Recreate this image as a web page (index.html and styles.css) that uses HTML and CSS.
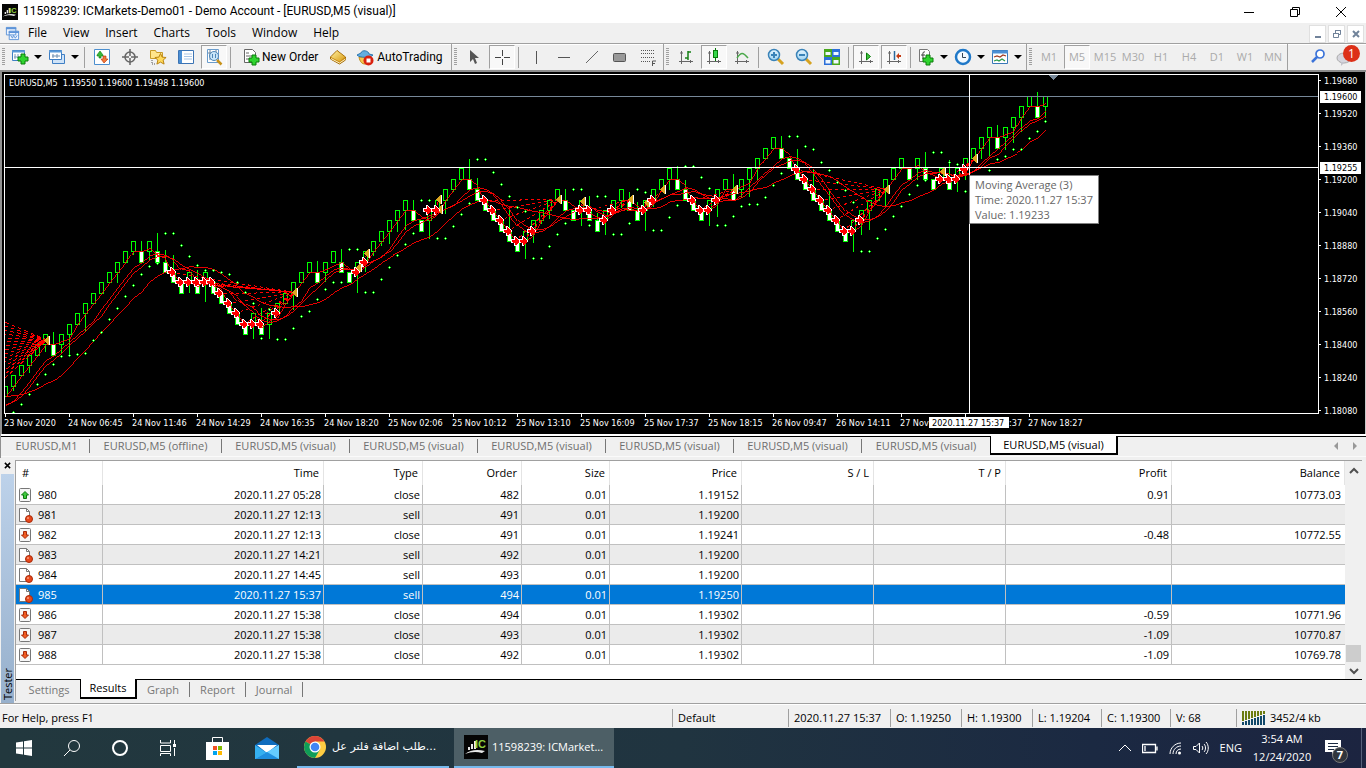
FILE: index.html
```html
<!DOCTYPE html>
<html lang="en">
<head>
<meta charset="utf-8">
<meta name="viewport" content="width=device-width, initial-scale=1">
<title>11598239: ICMarkets-Demo01 - Demo Account - [EURUSD,M5 (visual)]</title>
<link rel="stylesheet" href="styles.css">
</head>
<body>
<svg class="defs" aria-hidden="true">
  <defs>
    <linearGradient id="gold" x1="0" y1="0" x2="1" y2="1"><stop offset="0" stop-color="#fff0a0"/><stop offset="1" stop-color="#d79a12"/></linearGradient>
    <linearGradient id="lens" x1="0" y1="0" x2="0" y2="1"><stop offset="0" stop-color="#e6f6ff"/><stop offset="1" stop-color="#9dd3f2"/></linearGradient>
    <symbol id="plus" viewBox="0 0 12 12"><path d="M4 1h4v3h3v4H8v3H4V8H1V4h3z" fill="#2fd42f" stroke="#0b7d0b"/></symbol>
    <symbol id="axes" viewBox="0 0 18 18"><path d="M4.500 3v13M2 13.500h14M3 5h3M13.500 12v3" fill="none" stroke="#666"/></symbol>
    <symbol id="logo" viewBox="0 0 24 24"><path fill="#050505" d="M0 0h24v24H0z"/><path d="M1 19c5-4 12-5 20-3l-3 2c-6-2-12-1-17 1zM4 12h2v3H4zM7 9h2v5H7zM10 6h2v8h-2z" fill="#e8e8e8"/><text x="11" y="13" font-family="Liberation Sans, sans-serif" font-size="11" font-weight="bold" fill="#8fd040">IC</text></symbol>
    <symbol id="sheet" viewBox="0 0 16 16"><path d="M1.500 1.500h7l3 3v10h-10z" fill="#fff" stroke="#777"/><path d="M8.500 1.500v3h3" fill="none" stroke="#777"/><circle cx="11" cy="12" r="3.500" fill="#e8481c" stroke="#a82a08"/><circle cx="10" cy="11" r="1" fill="#ff9a78"/></symbol>
    <symbol id="down" viewBox="0 0 16 16"><rect x="1.500" y="1.500" width="11" height="13" rx="1" fill="#f6f6f6" stroke="#777"/><path d="M5.500 4.500h3V8h2L7 11.500 3.500 8h2z" fill="#f05a20" stroke="#a52a0a"/></symbol>
    <symbol id="up" viewBox="0 0 16 16"><rect x="1.500" y="1.500" width="11" height="13" rx="1" fill="#f6f6f6" stroke="#777"/><path d="M5.500 11.500h3V8h2L7 4.500 3.500 8h2z" fill="#3cc83c" stroke="#0c780c"/></symbol>
  </defs>
</svg>

<header class="titlebar">
  <svg class="app-icon" viewBox="0 0 24 24"><use href="#logo"/></svg>
  <h1 class="app-title">11598239: ICMarkets-Demo01 - Demo Account - [EURUSD,M5 (visual)]</h1>
  <div class="window-controls">
    <button aria-label="Minimize"><svg viewBox="0 0 12 12"><path d="M1 6.500h10"/></svg></button>
    <button aria-label="Restore"><svg viewBox="0 0 12 12"><path d="M1.500 3.500h7v7h-7zM3.500 3.500v-2h7v7h-2"/></svg></button>
    <button aria-label="Close"><svg viewBox="0 0 12 12"><path d="M1 1l10 10M11 1L1 11"/></svg></button>
  </div>
</header>

<nav class="menubar" aria-label="Main menu">
  <svg class="menu-icon" viewBox="0 0 16 16"><path d="M1.500 1.500h10v8h-10zM4.500 5.500h10v9h-10z" fill="#eef5ff" stroke="#5d93d8"/><path d="M1 2.500h11M4 6.500h11" stroke="#5d93d8" stroke-width="2"/><path d="M6 10l2 3 1-3 2 3 2-3" fill="none" stroke="#5d93d8"/></svg>
  <button>File</button><button>View</button><button>Insert</button><button>Charts</button><button>Tools</button><button>Window</button><button>Help</button>
  <div class="mdi-controls">
    <button aria-label="Minimize chart"><svg viewBox="0 0 12 12"><path d="M3 9h6" stroke-width="2"/></svg></button>
    <button aria-label="Restore chart"><svg viewBox="0 0 12 12"><path d="M2.500 5.500h5v4h-5zM4.500 5V2.500h5v4H8M2 5.500h6M4 2.500h6" /></svg></button>
    <button aria-label="Close chart"><svg viewBox="0 0 12 12"><path d="M3 3l6 6M9 3L3 9" stroke-width="2"/></svg></button>
  </div>
</nav>

<div class="toolbar" role="toolbar" aria-label="Toolbar">
  <div class="tools tools-standard">
    <button class="combo" aria-label="New chart"><svg viewBox="0 0 18 18"><path d="M1.500 2.500h12v10h-12z" fill="#fff" stroke="#3f7fc4"/><path d="M1 3.500h13" stroke="#5b9ad8" stroke-width="2"/><path d="M4 6v5M3 9h7M7 6v4" stroke="#7a9ab8"/><use href="#plus" x="6" y="5" width="12" height="12"/></svg><i class="caret"></i></button>
    <button class="combo" aria-label="Profiles"><svg viewBox="0 0 18 18"><path d="M4.500 6.500h12v9h-12z" fill="#cfe3f8" stroke="#3f7fc4"/><path d="M1.500 2.500h12v9h-12z" fill="#fff" stroke="#3f7fc4"/><path d="M1 3.500h13" stroke="#5b9ad8" stroke-width="2"/><path d="M4 8h8M5 6v4M9 6v4" stroke="#6f8fb0"/></svg><i class="caret"></i></button>
    <span class="sep"></span>
    <button aria-label="Market Watch"><svg viewBox="0 0 18 18"><path d="M1.500 1.500h15v15h-15z" fill="#fff" stroke="#4c8fcf"/><path d="M4 8V7l3-4 3 4v1H8v2H6V8z" fill="#38b838" stroke="#0a7a0a" stroke-width=".6"/><path d="M8 11l3 4 4-4h-2V8h-3v3z" fill="#f27a3a" stroke="#b32c04" stroke-width=".6"/></svg></button>
    <button aria-label="Data Window"><svg viewBox="0 0 18 18"><path d="M9 1v7M9 10v7M1 9h7M10 9h7" stroke="#666" stroke-width="1.500"/><circle cx="9" cy="9" r="5" fill="none" stroke="#666" stroke-width="1.500"/></svg></button>
    <button aria-label="Navigator"><svg viewBox="0 0 18 18"><path d="M1.500 2.500h5l1 2h6v6h-12z" fill="#ffe58c" stroke="#c79a28"/><path d="M3 12v4h4" fill="none" stroke="#555" stroke-dasharray="1 1"/><path d="M11.500 5.500l1.600 3.600 4 .4-3 2.600 1 4-3.600-2-3.600 2 1-4-3-2.600 4-.4z" fill="#ffd95a" stroke="#b98412"/></svg></button>
    <button aria-label="Terminal"><svg viewBox="0 0 18 18"><path d="M1.500 2.500h15v13h-15z" fill="#fff" stroke="#3c74b4"/><path d="M2 3h3v12H2z" fill="#4b8fd4"/><path d="M7 6h8M7 8.500h8M7 11h8" stroke="#a9c6e6"/></svg></button>
    <button class="pressed" aria-label="Strategy Tester" aria-pressed="true"><svg viewBox="0 0 18 18"><path d="M2.500 1.500h11v13h-11z" fill="#fff" stroke="#6a9ccc"/><path d="M5 2v10M11 2v5M3 5h4" stroke="#68829a"/><circle cx="9" cy="8" r="4.500" fill="#bfe2f8" fill-opacity=".85" stroke="#4f86b8"/><path d="M7.500 6v4M10.500 6v4" stroke="#4f86b8"/><path d="M12 12l4.500 4.500" stroke="#c8921a" stroke-width="2.500"/></svg></button>
    <span class="sep"></span>
    <button class="labelled"><svg viewBox="0 0 18 18"><path d="M2.500 1.500h8l3 3v10h-11z" fill="#fff" stroke="#666"/><path d="M4 5h3M4 8h7M4 11h4" stroke="#666"/><use href="#plus" x="6" y="6" width="12" height="12"/></svg>New Order</button>
    <button aria-label="MetaEditor"><svg viewBox="0 0 18 18"><path d="M1.500 9L8 2.500 16.500 9v3L10.500 16 1.500 11z" fill="#c98a14" stroke="#a26a06"/><path d="M2 9l6-6 8 6-5.500 4.500z" fill="url(#gold)"/><path d="M2 10.500L10.500 15l6-4" fill="none" stroke="#fff3c4"/></svg></button>
    <button class="labelled labelled-auto"><svg viewBox="0 0 18 18"><path d="M3 9c1 5 3 7 6 7s6-3 6-7z" fill="#f6c650" stroke="#bf8a18"/><path d="M1 7c2 3 14 3 16 0l-4-1c0-3-7-5-8-1z" fill="#63aee0" stroke="#2f78b0"/><circle cx="12.500" cy="12.500" r="5" fill="#d9200e"/><path fill="#fff" d="M10.500 10.500h4v4h-4z"/></svg>AutoTrading</button>
  </div>
  <div class="tools tools-line">
    <button aria-label="Cursor"><svg viewBox="0 0 18 18"><path d="M5 2v12l3-3 2 5 2-1-2-5h4z" fill="#555"/></svg></button>
    <button class="pressed" aria-label="Crosshair" aria-pressed="true"><svg viewBox="0 0 18 18"><path d="M9.500 2v6M9.500 11v6M2 9.500h6M11 9.500h6" stroke="#444"/></svg></button>
    <span class="sep"></span>
    <button aria-label="Vertical Line"><svg viewBox="0 0 18 18"><path d="M9.500 3v13" stroke="#555"/></svg></button>
    <button aria-label="Horizontal Line"><svg viewBox="0 0 18 18"><path d="M3 9.500h12" stroke="#555"/></svg></button>
    <button aria-label="Trendline"><svg viewBox="0 0 18 18"><path d="M3 15L15 3" stroke="#666"/></svg></button>
    <button aria-label="Rectangle"><svg viewBox="0 0 18 18"><rect x="2.500" y="5.500" width="12" height="8" rx="1" fill="#999" stroke="#555"/></svg></button>
    <button aria-label="Fibonacci"><svg viewBox="0 0 18 18"><path d="M2 2.500h14M2 5.500h14M2 9.500h14M2 13.500h9" stroke="#555" stroke-dasharray="1 1"/><path d="M13.500 18v-5H17M13 15.500h3" fill="none" stroke="#555"/></svg></button>
  </div>
  <div class="tools tools-charts">
    <button aria-label="Bar Chart"><svg viewBox="0 0 18 18"><use href="#axes"/><path d="M11 3v9M11 4h3M8 10h3" stroke="#168016" stroke-width="1.500"/></svg></button>
    <button class="pressed" aria-label="Candlesticks" aria-pressed="true"><svg viewBox="0 0 18 18"><use href="#axes"/><path d="M10.500 0v13" stroke="#087a08"/><rect x="8.500" y="2.500" width="4" height="7" fill="#35d64a" stroke="#087a08"/></svg></button>
    <button aria-label="Line Chart"><svg viewBox="0 0 18 18"><use href="#axes"/><path d="M4 10c4-6 6-6 11 0" fill="none" stroke="#4aa84a" stroke-width="1.500"/></svg></button>
    <span class="sep"></span>
    <button aria-label="Zoom In"><svg viewBox="0 0 18 18"><path d="M10.500 10.500l5.500 5.500" stroke="#d6a220" stroke-width="3"/><circle cx="7" cy="7" r="5.500" fill="url(#lens)" stroke="#3a83b8" stroke-width="1.500"/><path d="M4 7h6M7 4v6" stroke="#3a83b8" stroke-width="2"/></svg></button>
    <button aria-label="Zoom Out"><svg viewBox="0 0 18 18"><path d="M10.500 10.500l5.500 5.500" stroke="#d6a220" stroke-width="3"/><circle cx="7" cy="7" r="5.500" fill="url(#lens)" stroke="#3a83b8" stroke-width="1.500"/><path d="M4 7h6" stroke="#3a83b8" stroke-width="2"/></svg></button>
    <button aria-label="Tile Windows"><svg viewBox="0 0 18 18"><path d="M1 1h8v8H1zM9 9h8v8H9z" fill="#48a81c"/><path d="M9 1h8v8H9zM1 9h8v8H1z" fill="#2c6fd8"/><path d="M2.500 4h5v3h-5zM10.500 4h5v3h-5zM2.500 12h5v3.500h-5zM10.500 12h5v3.500h-5z" fill="#f0f8ff"/></svg></button>
    <span class="sep"></span>
    <button class="pressed" aria-label="Auto Scroll" aria-pressed="true"><svg viewBox="0 0 18 18"><use href="#axes"/><path d="M9.500 5l4 3.500-4 3.500z" fill="#3fc43f" stroke="#0b7d0b"/></svg></button>
    <button class="pressed" aria-label="Chart Shift" aria-pressed="true"><svg viewBox="0 0 18 18"><use href="#axes"/><path d="M9.500 3v9" stroke="#28699c" stroke-width="1.500"/><path d="M11 8l3-3v2h2v2h-2v2z" fill="#c43a12"/></svg></button>
    <span class="sep"></span>
    <button class="combo" aria-label="Indicators"><svg viewBox="0 0 18 18"><path d="M2.500 1.500h8l2 2v10h-10z" fill="#fff" stroke="#777"/><path d="M8 4c-3-1-2 3-2 7M4 7h4" fill="none" stroke="#444"/><use href="#plus" x="5" y="6" width="12" height="12"/></svg><i class="caret"></i></button>
    <button class="combo" aria-label="Periods"><svg viewBox="0 0 18 18"><circle cx="9" cy="9" r="7" fill="#f3faff" stroke="#1f78c8" stroke-width="2.500"/><path d="M8.500 5v4.500H12" fill="none" stroke="#345"/></svg><i class="caret"></i></button>
    <button class="combo" aria-label="Templates"><svg viewBox="0 0 18 18"><path d="M1.500 2.500h15v13h-15z" fill="#fff" stroke="#3878b8"/><path d="M1 4h16" stroke="#4b8fd4" stroke-width="3"/><path d="M3 9l3-1 3 1 3-2 3 1" fill="none" stroke="#a03a20" stroke-width="1.300"/><path d="M3 13l3-1 2 1 3-2 3 2" fill="none" stroke="#2b9a4a" stroke-width="1.300"/></svg><i class="caret"></i></button>
  </div>
  <div class="tools tools-periods">
    <button>M1</button><button class="pressed" aria-pressed="true">M5</button><button>M15</button><button>M30</button><button>H1</button><button>H4</button><button>D1</button><button>W1</button><button>MN</button>
  </div>
  <div class="tools-end">
    <button aria-label="Search"><svg viewBox="0 0 18 18"><circle cx="11" cy="6" r="4" fill="#fff" stroke="#3b73d9" stroke-width="1.700"/><path d="M8 9l-5 5" stroke="#3b73d9" stroke-width="2.500"/></svg></button>
    <button class="chat" aria-label="Notifications"><svg viewBox="0 0 18 18"><ellipse cx="8" cy="10" rx="7" ry="5" fill="#d6d6de" stroke="#aaa"/><path d="M5 14v4l4-4z" fill="#c4c4cc"/></svg><span class="badge">1</span></button>
  </div>
</div>

<main class="chart">
  <div class="plot">
    <svg id="plot" class="plot-canvas" role="img" aria-label="EURUSD M5 price chart"></svg>
    <div class="tooltip">Moving Average (3)<br>Time: 2020.11.27 15:37<br>Value: 1.19233</div>
  </div>
  <svg id="price-scale" class="price-scale"></svg>
  <svg id="time-scale" class="time-scale"></svg>
</main>

<div class="chart-tabs">
  <button class="chart-tab chart-tab-first">EURUSD,M1</button>
  <button class="chart-tab chart-tab-wide">EURUSD,M5 (offline)</button>
  <button class="chart-tab">EURUSD,M5 (visual)</button>
  <button class="chart-tab">EURUSD,M5 (visual)</button>
  <button class="chart-tab">EURUSD,M5 (visual)</button>
  <button class="chart-tab">EURUSD,M5 (visual)</button>
  <button class="chart-tab">EURUSD,M5 (visual)</button>
  <button class="chart-tab">EURUSD,M5 (visual)</button>
  <button class="chart-tab active">EURUSD,M5 (visual)</button>
  <div class="tab-scroll"><button aria-label="Scroll left"><svg viewBox="0 0 8 8"><path d="M6 0v8L2 4z"/></svg></button><button aria-label="Scroll right"><svg viewBox="0 0 8 8"><path d="M2 0v8l4-4z"/></svg></button></div>
</div>

<section class="tester" aria-label="Tester">
  <div class="tester-side">
    <button aria-label="Close tester"><svg viewBox="0 0 8 8"><path d="M1 1l6 6M7 1L1 7" stroke="#000" stroke-width="1.700"/></svg></button>
    <div class="tester-caption"><span>Tester</span></div>
  </div>
  <div class="tester-main">
    <div class="results">
      <table>
        <colgroup><col class="c-num"><col class="c-time"><col class="c-type"><col class="c-order"><col class="c-size"><col class="c-price"><col class="c-price"><col class="c-price"><col class="c-profit"><col></colgroup>
        <thead><tr><th>#</th><th>Time</th><th>Type</th><th>Order</th><th>Size</th><th>Price</th><th>S / L</th><th>T / P</th><th>Profit</th><th>Balance</th></tr></thead>
        <tbody>
          <tr><td><svg><use href="#up"/></svg>980</td><td>2020.11.27 05:28</td><td>close</td><td>482</td><td>0.01</td><td>1.19152</td><td></td><td></td><td>0.91</td><td>10773.03</td></tr>
          <tr><td><svg><use href="#sheet"/></svg>981</td><td>2020.11.27 12:13</td><td>sell</td><td>491</td><td>0.01</td><td>1.19200</td><td></td><td></td><td></td><td></td></tr>
          <tr><td><svg><use href="#down"/></svg>982</td><td>2020.11.27 12:13</td><td>close</td><td>491</td><td>0.01</td><td>1.19241</td><td></td><td></td><td>-0.48</td><td>10772.55</td></tr>
          <tr><td><svg><use href="#sheet"/></svg>983</td><td>2020.11.27 14:21</td><td>sell</td><td>492</td><td>0.01</td><td>1.19200</td><td></td><td></td><td></td><td></td></tr>
          <tr><td><svg><use href="#sheet"/></svg>984</td><td>2020.11.27 14:45</td><td>sell</td><td>493</td><td>0.01</td><td>1.19200</td><td></td><td></td><td></td><td></td></tr>
          <tr class="selected"><td><svg><use href="#sheet"/></svg>985</td><td>2020.11.27 15:37</td><td>sell</td><td>494</td><td>0.01</td><td>1.19250</td><td></td><td></td><td></td><td></td></tr>
          <tr><td><svg><use href="#down"/></svg>986</td><td>2020.11.27 15:38</td><td>close</td><td>494</td><td>0.01</td><td>1.19302</td><td></td><td></td><td>-0.59</td><td>10771.96</td></tr>
          <tr><td><svg><use href="#down"/></svg>987</td><td>2020.11.27 15:38</td><td>close</td><td>493</td><td>0.01</td><td>1.19302</td><td></td><td></td><td>-1.09</td><td>10770.87</td></tr>
          <tr><td><svg><use href="#down"/></svg>988</td><td>2020.11.27 15:38</td><td>close</td><td>492</td><td>0.01</td><td>1.19302</td><td></td><td></td><td>-1.09</td><td>10769.78</td></tr>
        </tbody>
      </table>
      <div class="scrollbar"><svg viewBox="0 0 10 10"><path d="M1 7l4-4 4 4"/></svg><span class="thumb"></span><svg viewBox="0 0 10 10"><path d="M1 3l4 4 4-4"/></svg></div>
    </div>
    <div class="tester-tabs">
      <button>Settings</button><button class="active">Results</button><button>Graph</button><button>Report</button><button>Journal</button>
    </div>
  </div>
</section>

<footer class="statusbar">
  <span class="status-help">For Help, press F1</span>
  <span class="s-profile">Default</span><span class="s-time">2020.11.27 15:37</span><span class="s-ohl">O: 1.19250</span><span class="s-ohl">H: 1.19300</span><span class="s-close">L: 1.19204</span><span class="s-close">C: 1.19300</span><span class="s-vol">V: 68</span>
  <span class="s-net"><svg viewBox="0 0 24 14"><path d="M0 0h2v10H0zM3 0h2v9H3zM6 0h2v8H6zM9 0h2v7H9zM12 0h2v6h-2zM15 0h2v5h-2zM18 0h2v4h-2zM21 0h2v3h-2z" fill="#6b7c10"/><path d="M0 11h2v3H0zM3 10h2v4H3zM6 9h2v5H6zM9 8h2v6H9zM12 7h2v7h-2zM15 6h2v8h-2zM18 5h2v9h-2zM21 4h2v10h-2z" fill="#10486a"/></svg>3452/4 kb</span>
</footer>

<div class="taskbar">
  <button aria-label="Start"><svg class="filled" viewBox="0 0 18 18"><path d="M1 3.500l7-1v6H1zM9 2.300L17 1v7.500H9zM1 9.500h7v6l-7-1zM9 9.500h8V17l-8-1.300z" fill="#fff"/></svg></button>
  <button aria-label="Search"><svg viewBox="0 0 18 18"><circle cx="11" cy="7" r="5.500"/><path d="M7 11l-6 6"/></svg></button>
  <button aria-label="Cortana"><svg viewBox="0 0 18 18"><circle cx="9" cy="9" r="7" stroke-width="2"/></svg></button>
  <button aria-label="Task View"><svg viewBox="0 0 18 18"><path d="M1.500 1v3h10V1M1.500 6.500h10v6h-10zM1.500 17v-2.500h10V17M15.500 1v4M15.500 9v8"/><path d="M14 5h3v3h-3z" fill="#fff" stroke="none"/></svg></button>
  <button class="wide-icon" aria-label="Microsoft Store"><svg class="filled" viewBox="0 0 24 24"><path d="M7.500 6V1.500h10V6" stroke="#fff"/><path fill="#fff" d="M1 6h23v18H1z"/><path fill="#f25022" d="M8 10h4v4H8z"/><path fill="#7fba00" d="M13 10h4v4h-4z"/><path fill="#00a4ef" d="M8 15h4v4H8z"/><path fill="#ffb900" d="M13 15h4v4h-4z"/></svg></button>
  <button class="wide-icon wide-icon-last" aria-label="Mail"><svg class="filled" viewBox="0 0 24 24"><path d="M0 9l12-8 12 8v14H0z" fill="#0f6cbd"/><path d="M2 9h20l-10 8z" fill="#fff"/><path d="M0 9l12 8 12-8v14H0z" fill="#35b0f0"/><path d="M0 23L24 9v14z" fill="#65ccff"/><path d="M0 23l12-7 12 7z" fill="#1f8fe0"/></svg></button>
  <button class="task task-chrome"><svg class="filled" viewBox="0 0 24 24"><circle cx="12" cy="12" r="11" fill="#ffcd42"/><path d="M12 12L2.500 6.500A11 11 0 0 1 21.500 6.500H12z" fill="#db4437"/><path d="M2.500 6.500A11 11 0 0 0 12 23l4.800-8.200L12 12z" fill="#0f9d58"/><circle cx="12" cy="12" r="5.500" fill="#fff"/><circle cx="12" cy="12" r="4.300" fill="#4285f4"/></svg><span>طلب اضافة فلتر عل...</span></button>
  <button class="task task-active"><svg class="filled" viewBox="0 0 24 24"><use href="#logo"/></svg><span>11598239: ICMarket...</span></button>
  <div class="tray">
    <svg viewBox="0 0 14 14"><path d="M1 10l6-6 6 6"/></svg>
    <svg viewBox="0 0 16 14"><path d="M.5 3.500h13v8H.5zM15 5.500v4M3 5v5" stroke-width="1.300"/></svg>
    <svg viewBox="0 0 14 14"><path d="M2 13C2 7 7 2 13 2M5 13c0-5 4-8 8-8M8 13c0-3 2-5 5-5"/><circle cx="11.500" cy="12" r="1.500" fill="#fff" stroke="none"/></svg>
    <svg class="volume" viewBox="0 0 18 14"><path d="M1.500 5.500H4L7.500 2v10L4 8.500H1.500zM10 5c1 1 1 3 0 4M12 3c2 2 2 6 0 8M14 1c3 3 3 9 0 12"/></svg>
    <span class="lang">ENG</span>
    <time class="clock">3:54 AM<br>12/24/2020</time>
    <button class="action" aria-label="Notifications"><svg viewBox="0 0 16 16"><path d="M0 0h16v12h-6l-3 4v-4H0z" fill="#fff" stroke="none"/><path class="note-lines" d="M3 3.500h10M3 6.500h10M3 9.500h6"/></svg><span class="count">7</span></button>
  </div>
</div>
<script src="chart.js"></script>
</body>
</html>
```
FILE: styles.css
```css
* { box-sizing: border-box; }

body {
  margin: 0;
  min-height: 100vh;
  display: flex;
  flex-direction: column;
  overflow: hidden;
  background: #f0f0f0;
  color: #000;
  font: 11px/16px "Open Sans", "Noto Sans", sans-serif;
}

button {
  margin: 0;
  padding: 0;
  border: 0;
  background: none;
  color: inherit;
  font: inherit;
  display: flex;
  align-items: center;
  justify-content: center;
  flex: none;
  white-space: nowrap;
}

svg { flex: none; }
.defs { position: absolute; width: 0; height: 0; }

/* Title bar */
.titlebar { display: flex; align-items: center; height: 23px; background: #fff; padding-left: 2px; }
.app-icon { width: 16px; height: 16px; }
.app-title { margin: 0 0 0 5px; font: 400 12px/23px Roboto, "Open Sans", sans-serif; }
.window-controls { display: flex; margin-left: auto; padding-right: 2px; }
.window-controls button { width: 46px; height: 20px; }
.window-controls svg { width: 12px; height: 12px; fill: none; stroke: #000; }

/* Menu bar */
.menubar { display: flex; align-items: center; height: 20px; padding-left: 5px; font-size: 12px; }
.menu-icon { width: 15px; height: 15px; }
.menubar > button { padding: 0 8px; height: 20px; }
.mdi-controls { display: flex; gap: 2px; margin: 1px 2px 0 auto; }
.mdi-controls button { width: 17px; height: 18px; background: #fff; border: 1px solid #e0e0e0; }
.mdi-controls svg { width: 12px; height: 12px; fill: none; stroke: #71839a; }

/* Toolbar */
.toolbar { display: flex; height: 29px; border-top: 1px solid #a0a0a0; border-bottom: 2px solid #8c8c8c; box-shadow: inset 0 1px #fff; }
.tools { display: flex; align-items: center; padding-left: 8px; border-right: 1px solid #a0a0a0; flex: none; background: repeating-linear-gradient(#a0a0a0 0 1px, #f0f0f0 1px 2px) 2px 4px / 3px 18px no-repeat; }
.tools button { width: 28px; height: 24px; }
.tools svg { width: 18px; height: 18px; }
.tools .combo { width: 37px; gap: 5px; }
.tools .labelled { width: auto; gap: 2px; padding: 0 6px 0 8px; font: 12px/16px Roboto, "Open Sans", sans-serif; }
.tools .labelled-auto { padding: 0 0 0 4px; gap: 3px; }
.caret { border: 4px solid transparent; border-top-color: #000; border-bottom: 0; width: 0; }
.sep { width: 4px; height: 21px; border-left: 1px solid #a0a0a0; margin-left: 2px; flex: none; }
.tools .pressed { width: 26px; margin: 0 1px; border: 1px solid #a0a0a0; border-right-color: #fff; border-bottom-color: #fff; background: #f8f8f8; }
.tools-standard { width: 452px; }
.tools-line { width: 212px; }
.tools-charts { width: 363px; }
.tools-periods { width: 261px; color: #aaa; }
.tools-end { display: flex; align-items: center; gap: 6px; margin-left: auto; padding-right: 6px; }
.tools-end button { width: 24px; height: 24px; }
.tools-end svg { width: 18px; height: 18px; }
.tools-end .chat { position: relative; justify-content: flex-start; }
.badge { position: absolute; right: 0; top: 0; width: 17px; height: 17px; border-radius: 50%; background: #dd3018; color: #fff; font-size: 12px; line-height: 17px; }

/* Chart */
.chart {
  display: grid;
  grid-template: minmax(200px, 1fr) 20px / 1fr 46px;
  flex: 1;
  padding: 2px 0 0 2px;
  background: #000;
  border-left: 2px solid #909090;
  border-right: 1px solid #c8c8c8;
}
.plot { position: relative; border: 1px solid #fff; min-width: 0; }
.plot-canvas { position: absolute; inset: 0; width: 100%; height: 100%; overflow: hidden; }
.price-scale { width: 46px; height: 100%; overflow: visible; }
.time-scale { grid-column: 1 / 3; width: 100%; height: 20px; overflow: hidden; }
.chart text { font: 9px "DejaVu Sans Condensed", "Open Sans", sans-serif; fill: #fff; white-space: pre; }
.chart text.on-white { fill: #000; }
.tooltip { position: absolute; left: 964px; top: 100px; padding: 1px 5px; background: #fff; border: 1px solid #808080; color: #666; line-height: 15px; white-space: nowrap; }

/* Chart tabs */
.chart-tabs { display: flex; height: 24px; padding: 0 0 4px 3px; border-left: 1px solid #909090; color: #6e6e6e; background: linear-gradient(#fff 0 2px, #000 2px 3px, #f0f0f0 3px 22px, #fafafa 22px 23px, #f0f0f0 23px); }
.chart-tab { width: 128px; height: 14px; margin-top: 5px; border-right: 1px solid #777; }
.chart-tab-first { width: 86px; }
.chart-tab-wide { width: 132px; }
.chart-tab:nth-last-child(3) { border-right: 0; }
.chart-tab.active { height: 19px; margin-top: 2px; background: #fff; color: #000; border: solid #000; border-width: 0 2px 2px 1px; }
.tab-scroll { display: flex; gap: 11px; margin: 6px 7px 0 auto; }
.tab-scroll button { height: 11px; }
.tab-scroll svg { width: 8px; height: 8px; fill: #999; }

/* Tester */
.tester { display: flex; }
.tester-side { display: flex; flex-direction: column; width: 15px; padding: 2px 1px 0; }
.tester-side button { height: 11px; }
.tester-side svg { width: 7px; height: 7px; }
.tester-caption { flex: 1; display: flex; align-items: flex-end; justify-content: center; margin-top: 3px; padding-bottom: 3px; background: linear-gradient(#bdd2ea, #97b0cc); }
.tester-caption span { writing-mode: vertical-rl; transform: rotate(180deg); line-height: 13px; }
.tester-main { flex: 1; min-width: 0; margin: 2px 4px 2px 0; border-left: 1px solid #a0a0a0; border-top: 1px solid #a0a0a0; }
.results { display: flex; background: #fff; padding-bottom: 14px; border-bottom: 1px solid #000; position: relative; }
table { flex: 1; align-self: flex-start; min-width: 0; table-layout: fixed; border-collapse: separate; border-spacing: 0; }
.c-num { width: 87px; }
.c-time { width: 221px; }
.c-type, .c-order { width: 99px; }
.c-size { width: 88px; }
.c-price { width: 132px; }
.c-profit { width: 166px; }
th { height: 24px; padding: 0 4px; font-weight: 400; text-align: right; border-right: 1px solid #e4e4e4; }
th:first-child { text-align: left; padding-left: 6px; }
td { height: 20px; padding: 0 2px; text-align: right; border-right: 1px solid #c0c0c0; border-bottom: 1px solid #c0c0c0; }
td:first-child { text-align: left; }
td:last-child { border-right: 0; padding-right: 4px; }
td svg { width: 16px; height: 16px; vertical-align: -4px; margin: 0 4px 0 0; }
tbody tr:nth-child(even) { background: #ebebeb; }
tbody tr.selected { background: #0078d7; color: #fff; }
.scrollbar { display: flex; flex-direction: column; align-items: center; width: 17px; margin-bottom: -14px; padding: 5px 0 3px; background: #f0f0f0; }
.scrollbar svg { width: 10px; height: 10px; fill: none; stroke: #505050; stroke-width: 2; }
.thumb { width: 15px; height: 17px; margin: auto 0 4px; background: #cdcdcd; }
.tester-tabs { display: flex; height: 21px; color: #777; }
.tester-tabs button { height: 15px; padding: 0 10px; margin-top: 2px; border-right: 1px solid #777; }
.tester-tabs button:first-child { border-right: 0; width: 64px; padding-right: 8px; }
.tester-tabs .active { position: relative; height: 20px; width: 57px; margin-top: -1px; background: #fff; color: #000; border: solid #000; border-width: 0 2px 2px 1px; }

/* Status bar */
.statusbar { display: flex; align-items: center; height: 25px; border-top: 1px solid #a0a0a0; box-shadow: inset 0 1px #fff; padding-top: 4px; }
.statusbar span { height: 18px; line-height: 18px; padding-left: 5px; border-left: 1px solid #a0a0a0; white-space: nowrap; flex: none; }
.statusbar .status-help { flex: 1; padding-left: 2px; border: 0; }
.s-profile { width: 116px; }
.s-time { width: 102px; }
.s-ohl { width: 71px; }
.s-close { width: 69px; }
.s-vol { width: 66px; }
.s-net { display: flex; align-items: center; gap: 4px; width: 130px; }
.s-net svg { width: 24px; height: 14px; }

/* Taskbar */
.taskbar { display: flex; height: 40px; background: linear-gradient(90deg, #22383e, #203440 50%, #1b2942 80%, #1c2440); color: #fff; }
.taskbar svg { width: 18px; height: 18px; fill: none; stroke: #fff; stroke-width: 1; }
.taskbar svg.filled { stroke: none; }
.taskbar button { width: 48px; }
.taskbar .wide-icon { width: 50px; }
.taskbar .wide-icon-last { margin-right: 5px; }
.taskbar .wide-icon svg, .taskbar .task svg { width: 24px; height: 24px; }
.taskbar .task { justify-content: flex-start; border-bottom: 2px solid #76b9ed; padding-left: 6px; gap: 4px; width: 152px; margin-right: 5px; }
.taskbar .task-chrome { gap: 5px; }
.taskbar .task-chrome span { font-family: "DejaVu Sans", sans-serif; }
.taskbar .task-active { width: 160px; padding-left: 10px; background: #4d5f66; margin-right: 0; }
.tray { display: flex; align-items: center; gap: 10px; margin-left: auto; padding-right: 4px; }
.tray > svg { width: 14px; height: 14px; }
.tray > svg.volume { width: 18px; }
.tray > svg:nth-child(2) { width: 16px; }
.clock { text-align: center; line-height: 18px; width: 60px; }
.taskbar .action { position: relative; width: 40px; height: 40px; padding-left: 3px; border-right: 1px solid #56617a; justify-content: flex-start; }
.action svg { width: 16px; height: 16px; }
.note-lines { stroke: #1c2a42; }
.count { position: absolute; left: 10px; top: 19px; width: 16px; height: 16px; line-height: 14px; border: 1px solid #777; border-radius: 50%; background: #30353c; font-weight: 700; }
```
FILE: chart.js
```js
// Brick chart: level 0 is 1.19600, each level is 5 points lower.
const STEP = 8, X0 = 5, Y0 = 96, LEVEL = 10.35;
const xOf = k => X0 + STEP * k;
const yOf = level => Math.round(Y0 + LEVEL * level);

// Body top level of each candle; a minus sign marks a falling candle.
const bricks = [
  28,27,26,25,24,23,-24,23,22,21,20,19,18,17,16,15,14,-15,14,-15,-16,-17,-18,17,-18,17,-18,-19,-20,-21,-22,21,
  -22,21,20,19,18,17,16,-17,16,15,-16,-17,16,15,14,13,12,11,10,-11,-12,11,10,9,8,7,-8,-9,-10,-11,-12,-13,-14,
  13,12,11,10,9,-10,-11,10,-11,-12,11,10,9,-10,-11,10,9,8,7,-8,-9,-10,-11,10,9,8,-9,8,7,6,5,4,-5,-6,-7,-8,-9,
  -10,-11,-12,-13,12,11,10,9,8,7,6,-7,6,-7,-8,7,-8,7,6,5,4,3,-4,3,2,1,0,-1,0
];

// Candle index -> far end of the wick.
const wicks = {
  1:391,3:373,5:352,6:332,7:354,8:354,10:332,14:283,16:255,17:241,18:261,19:233,20:250,21:255,23:293,24:270,25:302,
  31:339,32:308,33:339,36:310,39:261,40:282,42:249,44:293,45:272,46:256,47:246,48:244,49:232,50:230,51:200,53:239,
  55:214,56:192,58:159,59:178,63:210,65:259,66:243,67:224,68:219,70:189,72:226,73:196,74:213,75:235,77:208,78:192,
  79:202,80:231,81:207,83:190,84:166,85:180,88:226,89:217,91:174,92:198,93:197,94:180,96:150,97:136,99:149,101:169,
  103:190,106:252,107:235,108:230,110:207,114:180,115:152,118:160,119:192,120:180,122:159,123:157,124:125,125:150,
  126:143,127:132,129:92,130:118
};

const sar = [
  0,412,404,394,384,374,364,356,355,354,353,340,332,319,308,296,285,274,266,263,233,233,245,256,265,270,270,272,274,
  282,292,303,338,309,339,339,328,316,311,299,289,282,282,249,249,292,292,279,267,255,244,233,200,200,238,238,226,
  214,203,159,159,172,184,196,207,211,258,258,246,234,223,189,189,225,196,196,234,234,223,189,192,230,230,217,205,
  166,166,177,188,225,225,216,206,204,204,197,185,173,136,136,146,149,162,170,182,190,202,251,251,238,229,216,206,
  194,185,180,152,152,162,164,191,0,0,170,159,156,149,149,138,131,121
];

// Each closing mark with the entries that lead to it.
const trades = [
  { exit: [47,340], entries: [] },
  { exit: [295,292], entries: [[171,272],[179,282],[187,282],[195,282],[203,282],[210,282],[218,293],[227,303],[235,313],[243,324],[251,324],[259,324],[275,313]] },
  { exit: [359,267], entries: [[355,272]] },
  { exit: [367,253], entries: [[363,262]] },
  { exit: [440,209], entries: [[427,210]] },
  { exit: [439,199], entries: [[435,210]] },
  { exit: [559,199], entries: [[483,200],[491,210],[499,220],[507,231],[515,241],[523,241],[531,231]] },
  { exit: [583,201], entries: [[579,210]] },
  { exit: [631,199], entries: [[587,210],[603,220],[611,210]] },
  { exit: [647,202], entries: [[642,210]] },
  { exit: [663,189], entries: [[651,200]] },
  { exit: [735,189], entries: [[691,200],[699,210],[707,210],[715,200]] },
  { exit: [887,189], entries: [[795,169],[803,179],[811,189],[819,200],[827,210],[835,220],[843,231],[851,231],[859,220]] },
  { exit: [943,171], entries: [[939,179]] },
  { exit: [975,158], entries: [[947,179],[955,179],[963,169]] }
];

const history = [28,28,28,28,28,28,29,30,31,31,30,29];
const closes = history.concat(bricks.map(b => b < 0 ? -b + 1 : b));

function average(k, period) {
  const end = k + history.length + 1;
  return closes.slice(end - period, end).reduce((a, b) => a + b, 0) / period;
}

function averageLine(value) {
  const points = bricks.map((_, k) => `${xOf(k) + .5},${Math.round(Y0 + LEVEL * value(k)) + .5}`).join(' ');
  return `<polyline points="${points}" fill="none" stroke="#f00" stroke-width=".9"/>`;
}

function candle(b, k) {
  const x = xOf(k), falling = b < 0, top = yOf(Math.abs(b)), bottom = yOf(Math.abs(b) + 1);
  let out = '';
  if (wicks[k]) {
    const from = wicks[k] < top ? top : bottom;
    out += `<path d="M${x + .5} ${from}V${wicks[k]}" stroke="#0f0"/>`;
  }
  return out + `<rect x="${x - 1.5}" y="${top + .5}" width="4" height="${bottom - top}" fill="${falling ? '#fff' : '#000'}" stroke="#0f0"/>`;
}

let art = '<g transform="translate(-5 -75)" shape-rendering="crispEdges">';
art += bricks.map(candle).join('');
for (let i = 0; i < 15; i++) {
  art += `<path d="M5 ${322 + 4 * i}L47 340" stroke="#f00" stroke-dasharray="4 3" stroke-dashoffset="${i}"/>`;
}
for (const { exit, entries } of trades) {
  for (const [x, y] of entries) {
    art += `<path d="M${x} ${y + .5}L${exit[0]} ${exit[1] + .5}" stroke="#f00" stroke-dasharray="3 3"/>`;
  }
}
art += averageLine(k => average(k, 3));
art += averageLine(k => average(k, 6));
art += averageLine(k => average(k, 7));
art += averageLine(k => average(k, 12));
sar.forEach((y, k) => {
  if (y) art += `<path d="M${xOf(k) - 1} ${y + .5}h3M${xOf(k) + .5} ${y - 1}v3" stroke="#0f0"/><path d="M${xOf(k)} ${y + .5}h1" stroke="#cfc"/>`;
});
for (const { exit: [x, y], entries } of trades) {
  for (const [ax, ay] of entries) {
    art += `<path transform="translate(${ax} ${ay})" d="M-3.5 -1.5h3v-3h1l4 4v1l-4 4h-1v-3h-3z" fill="#f00" stroke="#fff"/>`;
    art += `<path transform="translate(${ax} ${ay})" d="M-2 -1h3v-2l3 3v1l-3 3v-2h-3z" fill="#f00"/>`;
  }
  art += `<path transform="translate(${x} ${y})" d="M2 -4v9l-5 -4v-1z" fill="#daa520"/><path d="M${x + 2.5} ${y - 4}v9" stroke="#fff"/>`;
}
art += '<path d="M1048 75h10l-5 5z" fill="#778899"/></g>';
art += '<g shape-rendering="crispEdges"><line x1="0" y1="21.5" x2="100%" y2="21.5" stroke="#778899"/>';
art += '<line x1="0" y1="92.5" x2="100%" y2="92.5" stroke="#fff"/><line x1="964.5" y1="0" x2="964.5" y2="100%" stroke="#fff"/></g>';
art += '<text x="4" y="11">EURUSD,M5  1.19550 1.19600 1.19498 1.19600</text>';
document.getElementById('plot').innerHTML = art;

let prices = '';
for (let i = 0; i <= 10; i++) {
  const y = 6 + 33 * i;
  prices += `<path d="M0 ${y + .5}h2" stroke="#fff"/><text x="5" y="${y + 4}">${(1.1968 - .0016 * i).toFixed(5)}</text>`;
}
for (const [y, value] of [[23, '1.19600'], [94, '1.19255']]) {
  prices += `<rect x="1" y="${y - 6}" width="41" height="12" fill="#fff"/><text class="on-white" x="5" y="${y + 3}">${value}</text>`;
}
document.getElementById('price-scale').innerHTML = prices;

// The crosshair's time box takes the place of part of the last labels.
const times = ['23 Nov 2020','24 Nov 06:45','24 Nov 11:46','24 Nov 14:29','24 Nov 16:35','24 Nov 18:20','25 Nov 02:06','25 Nov 10:12','25 Nov 13:10','25 Nov 16:09','25 Nov 17:37','25 Nov 18:15','26 Nov 09:47','26 Nov 14:11','27 Nov','','27 Nov 18:27'];
document.getElementById('time-scale').innerHTML = times.map((t, i) =>
  `<path d="M${1.5 + 64 * i} 0v3" stroke="#fff"/><text x="${64 * i}" y="12">${t}</text>`).join('') +
  '<text x="1005" y="12">:37</text><rect x="925" y="3" width="80" height="11" fill="#fff"/><text class="on-white" x="928" y="12">2020.11.27 15:37</text>';
```
